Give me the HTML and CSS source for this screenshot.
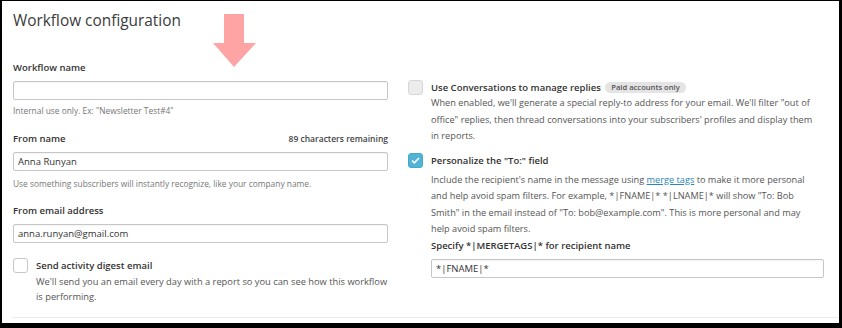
FILE: index.html
```html
<!DOCTYPE html>
<html lang="en">
<head>
    <meta charset="UTF-8">
    <title>Workflow configuration</title>
    <link rel="stylesheet" href="styles.css">
</head>
<body>

    <div class="frame">
        <h1>Workflow configuration</h1>

        <!-- annotation arrow pointing at the name field -->
        <svg class="arrow" width="44" height="54" viewBox="0 0 44 54">
            <polygon points="11,0 31,0 31,29 43,29 21,53 0,29 11,29" fill="#ffa4a4"/>
        </svg>

        <div class="columns">
            <!-- Left column -->
            <div class="col-left">
                <div class="field-head">
                    <label class="field-label">Workflow name</label>
                </div>
                <input class="text-input" type="text" value="">
                <p class="help">Internal use only. Ex: "Newsletter Test#4"</p>

                <div class="field-head gap-top">
                    <label class="field-label">From name</label>
                    <span class="counter">89 characters remaining</span>
                </div>
                <input class="text-input" type="text" value="Anna Runyan">
                <p class="help help-2">Use something subscribers will instantly recognize, like your company name.</p>

                <div class="field-head gap-top-2">
                    <label class="field-label">From email address</label>
                </div>
                <input class="text-input" type="text" value="anna.runyan@gmail.com">

                <div class="option option-digest">
                    <span class="box"></span>
                    <div class="option-body">
                        <div class="option-title">Send activity digest email</div>
                        <p class="option-desc left-desc">We'll send you an email every day with a report so you can see how this workflow is performing.</p>
                    </div>
                </div>
            </div>

            <!-- Right column -->
            <div class="col-right">
                <div class="option">
                    <span class="box disabled"></span>
                    <div class="option-body">
                        <div class="option-title">Use Conversations to manage replies <span class="badge">Paid accounts only</span></div>
                        <p class="option-desc">When enabled, we'll generate a special reply-to address for your email. We'll filter "out of office" replies, then thread conversations into your subscribers' profiles and display them in reports.</p>
                    </div>
                </div>

                <div class="option option-to">
                    <span class="box checked">
                        <svg width="9" height="7" viewBox="0 0 9 7"><path d="M1 3.6 L3.4 5.8 L8 1" fill="none" stroke="#fff" stroke-width="1.6"/></svg>
                    </span>
                    <div class="option-body">
                        <div class="option-title">Personalize the "To:" field</div>
                        <p class="option-desc desc-to">Include the recipient's name in the message using <a href="#">merge tags</a> to make it more personal and help avoid spam filters. For example, *|FNAME|* *|LNAME|* will show "To: Bob Smith" in the email instead of "To: bob@example.com". This is more personal and may help avoid spam filters.</p>
                        <label class="field-label specify">Specify *|MERGETAGS|* for recipient name</label>
                        <input class="text-input" type="text" value="*|FNAME|*">
                    </div>
                </div>
            </div>
        </div>

        <div class="divider"></div>
    </div>

</body>
</html>
```

FILE: styles.css
```css
body {
    margin: 0;
    font-family: "Open Sans", Arial, sans-serif;
    color: #333;
}

.frame {
    position: relative;
    box-sizing: border-box;
    width: 842px;
    height: 328px;
    background-color: #fff;
    border-style: solid;
    border-color: #000;
    border-width: 1px 3px 5px 2px;
    padding-left: 11px;
}

h1 {
    margin: 10px 0 0 0;
    font-size: 15.4px;
    line-height: 20px;
    font-weight: 400;
    color: #3b3b3b;
}

.arrow {
    position: absolute;
    left: 211px;
    top: 13px;
}

.columns {
    display: grid;
    grid-template-columns: 375px 416px;
    column-gap: 20px;
    margin-top: 30px;
}

.field-head {
    display: flex;
    justify-content: space-between;
    align-items: baseline;
    height: 14px;
}

.gap-top {
    margin-top: 15px;
}

.gap-top-2 {
    margin-top: 14px;
}

.field-label {
    display: block;
    font-size: 9.5px;
    line-height: 14px;
    font-weight: 600;
    color: #333;
}

.counter {
    font-size: 8.5px;
    font-weight: 600;
    color: #444;
}

.text-input {
    display: block;
    box-sizing: border-box;
    width: 100%;
    height: 19px;
    margin: 5px 0 0 0;
    padding: 0 4px;
    border: 1px solid #c6c6c6;
    border-radius: 2px;
    box-shadow: inset 0 1px 1px rgba(0, 0, 0, 0.04);
    font-family: "Open Sans", Arial, sans-serif;
    font-size: 9.5px;
    color: #333;
}

.field-head + .text-input {
    margin-top: 6px;
}

.help {
    margin: 5px 0 0 0;
    font-size: 8.4px;
    line-height: 12px;
    color: #777;
}

.help-2 {
    margin-top: 7px;
}

.option {
    display: flex;
    gap: 8px;
}

.option-digest {
    margin-top: 15px;
}

.box {
    flex: none;
    box-sizing: border-box;
    width: 15px;
    height: 15px;
    border: 1px solid #c8c8c8;
    border-radius: 3px;
    background-color: #fff;
    display: flex;
    align-items: center;
    justify-content: center;
}

.box.disabled {
    background-color: #ececec;
    border-color: #d6d6d6;
}

.box.checked {
    background-color: #52b4d5;
    border-color: #46a9cb;
}

.option-body {
    flex: 1;
}

.option-title {
    font-size: 9.5px;
    line-height: 15px;
    font-weight: 600;
    color: #333;
}

.badge {
    display: inline-block;
    margin-left: 2px;
    padding: 0 6px;
    border-radius: 6px;
    background-color: #e4e4e4;
    font-size: 7.6px;
    line-height: 11px;
    font-weight: 600;
    color: #555;
    vertical-align: 1px;
}

.option-desc {
    margin: 0;
    padding-right: 6px;
    font-size: 9.2px;
    line-height: 16.5px;
    color: #555;
}

.left-desc {
    margin-top: 1px;
    padding-right: 0;
    font-size: 9.3px;
    line-height: 15px;
}

.col-right {
    padding-top: 19px;
}

.option-to {
    margin-top: 8px;
}

.desc-to {
    margin-top: 4px;
}

.option-desc a {
    color: #2a86b8;
    text-decoration: underline;
}

.specify {
    margin-top: 1px;
}

.specify + .text-input {
    margin-top: 6px;
}

.divider {
    position: absolute;
    left: 10px;
    right: 0;
    top: 316px;
    border-top: 1px solid #ececec;
}
```
